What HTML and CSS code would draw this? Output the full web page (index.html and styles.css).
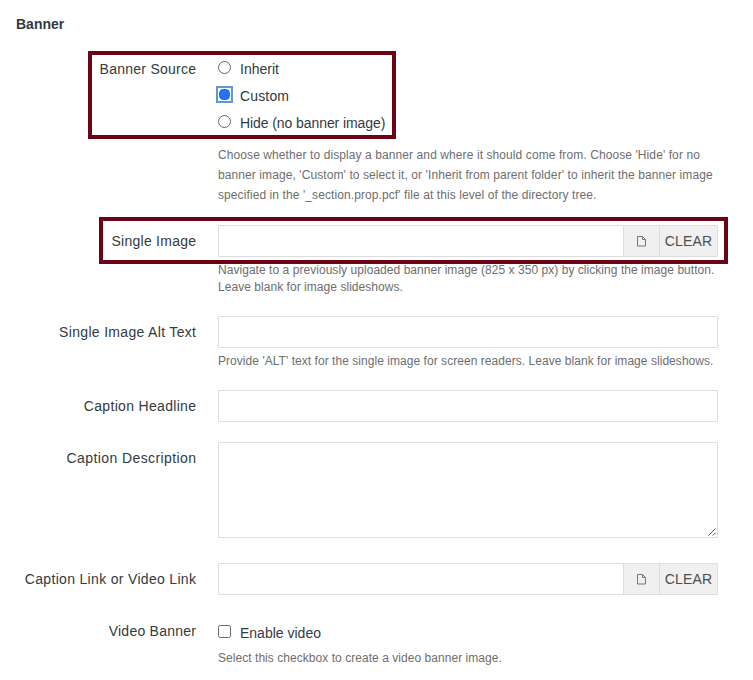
FILE: index.html
```
<!DOCTYPE html>
<html lang="en">
<head>
<meta charset="utf-8">
<title>Banner</title>
<link rel="stylesheet" href="styles.css">
</head>
<body>
<main class="form">
  <h2 class="title">Banner</h2>

  <div class="row row-source">
    <span class="label">Banner Source</span>
    <div class="field">
      <label class="option"><span class="radio"></span><span>Inherit</span></label>
      <label class="option"><span class="radio radio-on"></span><span class="option-custom">Custom</span></label>
      <label class="option"><span class="radio"></span><span class="option-hide">Hide (no banner image)</span></label>
      <p class="help help-loose">Choose whether to display a banner and where it should come from. Choose 'Hide' for no<br>banner image, 'Custom' to select it, or 'Inherit from parent folder' to inherit the banner image<br>specified in the '_section.prop.pcf' file at this level of the directory tree.</p>
    </div>
    <div class="mark mark-source"></div>
  </div>

  <div class="row row-image">
    <span class="label">Single Image</span>
    <div class="field">
      <div class="group">
        <div class="group-input"></div>
        <div class="group-file"><svg width="10" height="12" viewBox="0 0 10 12"><path d="M.5 1.5h5l3 3v6.5h-8zM5.5 1.5v3h3" fill="none" stroke="#777" stroke-width="1"/></svg></div>
        <div class="group-clear">CLEAR</div>
      </div>
      <p class="help">Navigate to a previously uploaded banner image (825 x 350 px) by clicking the image button.<br>Leave blank for image slideshows.</p>
    </div>
    <div class="mark mark-image"></div>
  </div>

  <div class="row row-alt">
    <span class="label">Single Image Alt Text</span>
    <div class="field">
      <div class="input"></div>
      <p class="help">Provide 'ALT' text for the single image for screen readers. Leave blank for image slideshows.</p>
    </div>
  </div>

  <div class="row row-headline">
    <span class="label">Caption Headline</span>
    <div class="field"><div class="input"></div></div>
  </div>

  <div class="row row-desc">
    <span class="label">Caption Description</span>
    <div class="field">
      <div class="area"><svg width="10" height="10" viewBox="0 0 10 10"><path d="M1.5 8.5l7-7M5.8 8.5l2.7-2.7" fill="none" stroke="#555" stroke-width="1"/></svg></div>
    </div>
  </div>

  <div class="row row-link">
    <span class="label">Caption Link or Video Link</span>
    <div class="field">
      <div class="group">
        <div class="group-input"></div>
        <div class="group-file"><svg width="10" height="12" viewBox="0 0 10 12"><path d="M.5 1.5h5l3 3v6.5h-8zM5.5 1.5v3h3" fill="none" stroke="#777" stroke-width="1"/></svg></div>
        <div class="group-clear">CLEAR</div>
      </div>
    </div>
  </div>

  <div class="row row-video">
    <span class="label">Video Banner</span>
    <div class="field">
      <label class="option"><span class="check"></span><span>Enable video</span></label>
      <p class="help">Select this checkbox to create a video banner image.</p>
    </div>
  </div>
</main>
</body>
</html>
```
FILE: styles.css
```
* { box-sizing: border-box; }
body {
  margin: 0;
  background: #fff;
  color: #333a40;
  font: 14px/20px "Liberation Sans", Arial, sans-serif;
}
.form { width: 753px; padding-top: 14px; }
.title { margin: 0 0 22px 16px; font-size: 14px; line-height: 20px; }
.row {
  position: relative;
  display: grid;
  grid-template-columns: 196px 500px;
  column-gap: 22px;
  margin-bottom: 20px;
}
.label {
  padding-top: 6px;
  text-align: right;
  letter-spacing: .25px;
  margin-right: -.25px;
  white-space: nowrap;
}
.option {
  display: flex;
  align-items: center;
  height: 27px;
  gap: 9px;
  white-space: nowrap;
}
.option-custom { letter-spacing: .15px; }
.option-hide { letter-spacing: -.08px; }
.radio {
  width: 13px;
  height: 13px;
  margin-top: -3px;
  border: 1px solid #666;
  border-radius: 50%;
}
.radio-on {
  position: relative;
  width: 11px;
  height: 11px;
  margin-left: 1px;
  margin-right: 1px;
  border-color: #1d5fd6;
  border-radius: 4.5px;
  background: #2474f5;
}
/* square focus ring */
.radio-on::after {
  content: "";
  position: absolute;
  inset: -4px;
  border: 2px solid #5b9bcd;
}
.check {
  width: 13px;
  height: 13px;
  margin-top: -3px;
  border: 1px solid #666;
  border-radius: 2.5px;
}
.help {
  margin: 5px 0 0;
  color: #6e6e6e;
  font-size: 12px;
  line-height: 17px;
  letter-spacing: .045px;
  white-space: nowrap;
}
.help-loose { margin-top: 9px; line-height: 20px; letter-spacing: .09px; }
.input, .area, .group {
  height: 32px;
  border: 1px solid #ddd;
  border-radius: 1px;
  background: #fff;
}
.area {
  display: flex;
  align-items: flex-end;
  justify-content: flex-end;
  height: 96px;
}
.group { display: flex; }
.group-input { flex: 1; }
.group-file, .group-clear {
  display: flex;
  align-items: center;
  justify-content: center;
  border-left: 1px solid #ddd;
  background: #f0f0f0;
}
.group-file { width: 36px; }
.group-clear { width: 58px; color: #4d4d4d; letter-spacing: .15px; }
.row-source .label { padding-top: 3px; }
.row-source .field { margin-top: -1px; }
.row-desc { margin-bottom: 25px; }
.row-desc .label { letter-spacing: .4px; margin-right: -.4px; }
.row-link .label, .row-alt .label, .row-headline .label { letter-spacing: .32px; margin-right: -.32px; }
.row-video { margin-top: 24px; margin-bottom: 0; }
.row-video .label { padding-top: 2px; }
.row-video .help { margin-top: 4px; }
.mark {
  position: absolute;
  border: 4px solid #6b0414;
  pointer-events: none;
}
.mark-source { left: 88px; top: -5px; width: 308px; height: 88px; }
.mark-image { left: 99px; top: -8px; width: 629px; height: 47px; }
```
